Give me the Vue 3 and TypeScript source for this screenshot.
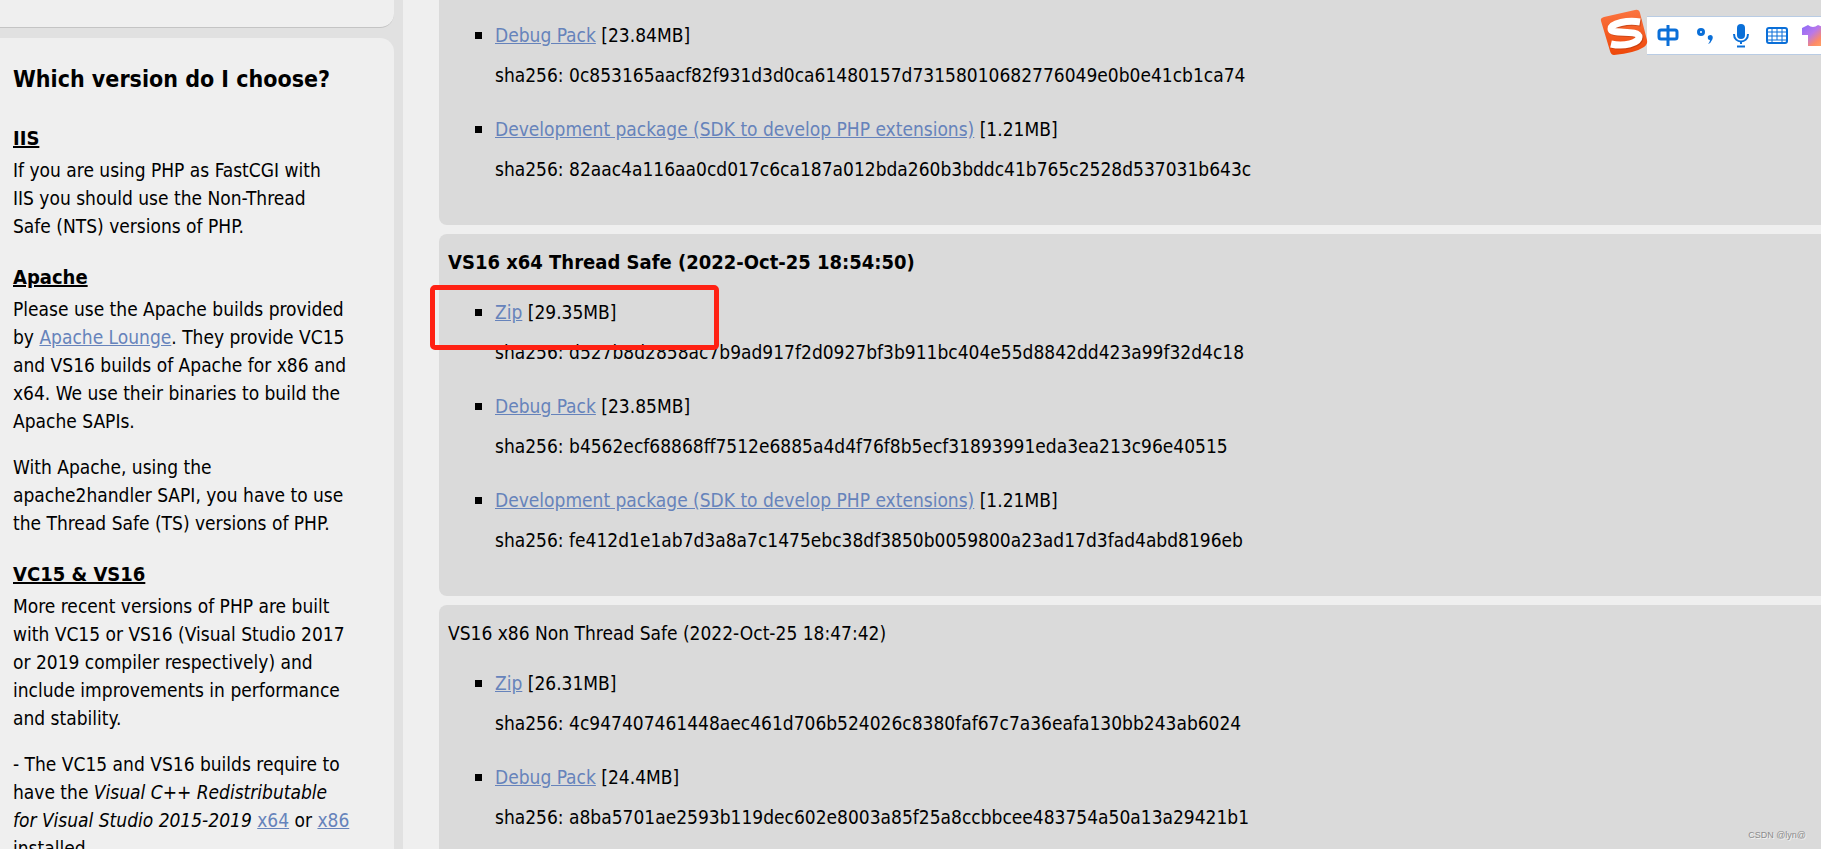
<script setup lang="ts">
interface Download {
  name: string
  size: string
  sha: string
}

interface Build {
  title: string
  strong: boolean
  marked: boolean
  downloads: Download[]
}

const devPackage = 'Development package (SDK to develop PHP extensions)'

const builds: Build[] = [
  {
    title: '',
    strong: false,
    marked: false,
    downloads: [
      { name: 'Debug Pack', size: '23.84MB', sha: '0c853165aacf82f931d3d0ca61480157d73158010682776049e0b0e41cb1ca74' },
      { name: devPackage, size: '1.21MB', sha: '82aac4a116aa0cd017c6ca187a012bda260b3bddc41b765c2528d537031b643c' },
    ],
  },
  {
    title: 'VS16 x64 Thread Safe (2022-Oct-25 18:54:50)',
    strong: true,
    marked: true,
    downloads: [
      { name: 'Zip', size: '29.35MB', sha: 'd527b8d2858ac7b9ad917f2d0927bf3b911bc404e55d8842dd423a99f32d4c18' },
      { name: 'Debug Pack', size: '23.85MB', sha: 'b4562ecf68868ff7512e6885a4d4f76f8b5ecf31893991eda3ea213c96e40515' },
      { name: devPackage, size: '1.21MB', sha: 'fe412d1e1ab7d3a8a7c1475ebc38df3850b0059800a23ad17d3fad4abd8196eb' },
    ],
  },
  {
    title: 'VS16 x86 Non Thread Safe (2022-Oct-25 18:47:42)',
    strong: false,
    marked: false,
    downloads: [
      { name: 'Zip', size: '26.31MB', sha: '4c947407461448aec461d706b524026c8380faf67c7a36eafa130bb243ab6024' },
      { name: 'Debug Pack', size: '24.4MB', sha: 'a8ba5701ae2593b119dec602e8003a85f25a8ccbbcee483754a50a13a29421b1' },
    ],
  },
]
</script>

<template>
  <div class="page">
    <aside class="sidebar">
      <div class="panel panel-above"></div>
      <section class="panel guide">
        <h2>Which version do I choose?</h2>

        <h3>IIS</h3>
        <p>If you are using PHP as FastCGI with<br />IIS you should use the Non-Thread<br />Safe (NTS) versions of PHP.</p>

        <h3>Apache</h3>
        <p>Please use the Apache builds provided<br />by <a href="#">Apache Lounge</a>. They provide VC15<br />and VS16 builds of Apache for x86 and<br />x64. We use their binaries to build the<br />Apache SAPIs.</p>
        <p>With Apache, using the<br />apache2handler SAPI, you have to use<br />the Thread Safe (TS) versions of PHP.</p>

        <h3>VC15 &amp; VS16</h3>
        <p>More recent versions of PHP are built<br />with VC15 or VS16 (Visual Studio 2017<br />or 2019 compiler respectively) and<br />include improvements in performance<br />and stability.</p>
        <p>- The VC15 and VS16 builds require to<br />have the <em>Visual C++ Redistributable<br />for Visual Studio 2015-2019</em> <a href="#">x64</a> or <a href="#">x86</a><br />installed.</p>
      </section>
    </aside>

    <main class="content">
      <section v-for="(build, i) in builds" :key="i" class="card" :class="{ continued: !build.title }">
        <h4 v-if="build.title" :class="{ strong: build.strong }">{{ build.title }}</h4>
        <ul>
          <li v-for="item in build.downloads" :key="item.sha">
            <div><a href="#">{{ item.name }}</a> [{{ item.size }}]</div>
            <div class="sha">sha256: {{ item.sha }}</div>
          </li>
        </ul>
        <div v-if="build.marked" class="marker"></div>
      </section>
    </main>

    <div class="ime">
      <svg class="logo" width="48" height="48" viewBox="0 0 48 48" aria-hidden="true">
        <defs>
          <linearGradient id="logoFill" x1="0" y1="0" x2="0" y2="1">
            <stop offset="0" stop-color="#fb7440" />
            <stop offset="1" stop-color="#ee4709" />
          </linearGradient>
        </defs>
        <path d="M4 9 L35 2 Q39 1 40 5 L47 32 Q48 36 44 39 Q35 45 14 47 Q11 47 10 43 L1 13 Q0 10 4 9Z" fill="url(#logoFill)" />
        <path d="M40 14 C28 12 11 15 11 21 C11 27 39 21 39 29 C39 35 24 39 11 36" fill="none" stroke="#a8330c" stroke-opacity=".5" stroke-width="7" transform="translate(1 1)" />
        <path d="M40 14 C28 12 11 15 11 21 C11 27 39 21 39 29 C39 35 24 39 11 36" fill="none" stroke="#fff" stroke-width="7" />
      </svg>
      <svg class="tools" width="174" height="40" viewBox="0 0 174 40" aria-hidden="true">
        <defs>
          <linearGradient id="shirtFill" x1="0" y1="0" x2="1" y2="1">
            <stop offset="0" stop-color="#8a6bfa" />
            <stop offset=".4" stop-color="#b878ea" />
            <stop offset=".7" stop-color="#fd8a68" />
            <stop offset="1" stop-color="#ffae62" />
          </linearGradient>
        </defs>
        <g fill="none" stroke="#0a6fd8" stroke-width="3">
          <rect x="12" y="14" width="18" height="9" rx="2" />
          <path d="M21 9V30" />
          <circle cx="54" cy="16" r="2.500" />
          <path d="M87 18C87 28 101 28 101 18" stroke-width="2" />
          <path d="M90 30.500H98" stroke-width="2" />
          <path d="M94 25V28" stroke-width="2" />
          <rect x="120" y="12" width="20" height="15" rx="2" stroke-width="2" />
        </g>
        <path d="M61 20C65 17 67 21 65 24Q64 27 61 28Q63 26 63 24Q60 24 61 20Z" fill="#0a6fd8" />
        <rect x="90" y="8" width="8" height="15" rx="4" fill="#0a6fd8" />
        <path d="M120 16H140M120 20H140M120 24H140M125 12V27M130 12V24M135 12V27" fill="none" stroke="#0a6fd8" stroke-width="1" />
        <path d="M161 9Q166 13 171 9L179 12V19H174V30H161V19L155 19V12Z" fill="url(#shirtFill)" />
      </svg>
    </div>

    <div class="credit">CSDN @lyn@</div>
  </div>
</template>

<style>
body {
  margin: 0;
}
</style>

<style scoped>
.page {
  position: relative;
  display: flex;
  height: 100vh;
  overflow: hidden;
  background: #efefef;
  color: #000;
  font-family: "DejaVu Sans Condensed", "Noto Sans", sans-serif;
  font-size: 19px;
  line-height: 28px;
  white-space: nowrap;
}
a {
  color: #6683bb;
  text-decoration: underline;
}
.sidebar {
  flex: 0 0 403px;
  box-sizing: border-box;
  padding-right: 9px;
  background: #e1e1e1;
}
.panel {
  background: #efefef;
}
.panel-above {
  height: 27px;
  margin-bottom: 10px;
  border-bottom: 1px solid #c4c4c4;
  border-radius: 0 0 14px 0;
}
.guide {
  padding: 27px 13px;
  border-radius: 0 14px 0 0;
}
h2,
h3,
h4,
p,
ul {
  margin: 0;
}
h2 {
  margin-bottom: 31px;
  font-size: 23px;
  line-height: 28px;
}
h3 {
  margin-bottom: 4px;
  font-size: 20px;
  text-decoration: underline;
}
p + p {
  margin-top: 18px;
}
p + h3 {
  margin-top: 23px;
}
.content {
  flex: 1;
  min-width: 0;
  padding-left: 36px;
}
.card {
  position: relative;
  margin-bottom: 9px;
  padding: 14px 0 42px 9px;
  border-radius: 8px 0 0 8px;
  background: #dadada;
}
.continued {
  padding-top: 21px;
  border-radius: 0 0 0 8px;
}
h4 {
  margin-bottom: 22px;
  font-size: 19px;
  font-weight: 400;
}
.strong {
  font-size: 20px;
  font-weight: 700;
}
ul {
  padding: 0 0 0 47px;
  list-style: none;
}
li {
  position: relative;
}
li + li {
  margin-top: 26px;
}
li::before {
  position: absolute;
  top: 11px;
  left: -20px;
  width: 7px;
  height: 7px;
  background: #000;
  content: "";
}
.sha {
  margin-top: 12px;
}
.marker {
  position: absolute;
  top: 51px;
  left: -9px;
  box-sizing: border-box;
  width: 289px;
  height: 65px;
  border: 5px solid #ff2113;
  border-radius: 5px;
}
.ime {
  position: absolute;
  top: 16px;
  right: 0;
  box-sizing: border-box;
  width: 174px;
  height: 39px;
  border: solid #b9cce4;
  border-width: 1px 0;
  background: #fff;
}
.logo {
  position: absolute;
  top: -9px;
  left: -47px;
}
.tools {
  position: absolute;
  top: -1px;
  left: 0;
}
.credit {
  position: absolute;
  right: 15px;
  bottom: 8px;
  color: #8c8c8c;
  font-family: "Liberation Sans", Arial, sans-serif;
  font-size: 9px;
  line-height: 12px;
  text-shadow: 1px 1px 0 #f2f2f2;
}
</style>
